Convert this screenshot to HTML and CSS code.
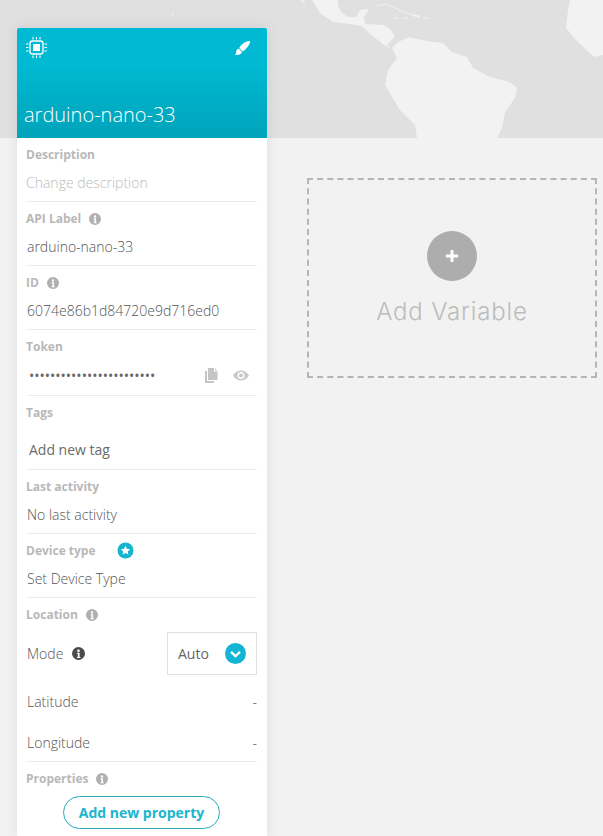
FILE: index.html
```html
<!DOCTYPE html>
<html lang="en">
<head>
<meta charset="utf-8">
<title>arduino-nano-33</title>
<link rel="stylesheet" href="styles.css">
</head>
<body>
<svg class="map" width="603" height="138" viewBox="0 0 603 138" aria-hidden="true">
  <rect width="603" height="138" fill="#e0e0e0"/>
  <g fill="#f2f2f2">
    <path d="M312 0L320 13L333 22L350 24L362 26L370 34L378 40L385 46L392 49L387 45L391 41L395 36L390 29L383 25L365 24L364 17L369 10L368 9L360 10L356 17L348 17L341 12L338 5L338 0Z"/>
    <path d="M392 48L398 42L410 37L417 39L433 42L443 43L452 52L467 57L473 68L490 77L510 82L517 88L515 98L505 112L502 128L497 138L417 138L415 125L400 110L392 97L385 85L388 70L397 58Z"/>
    <path d="M570 0L568 10L566 28L576 40L594 57L603 55L603 0Z"/>
    <circle cx="173" cy="14" r="1"/>
  </g>
  <g fill="none" stroke="#f2f2f2">
    <path d="M301 0L305 3" stroke-width="1.5"/>
    <path d="M377 6L387 4L403 12L413 15" stroke-width="1"/>
    <path d="M413 15L420 17" stroke-width="2"/>
    <path d="M423 17L430 19M393 18L399 18M403 18L408 18" stroke-width="1"/>
  </g>
</svg>
<div class="layout">
  <aside class="device">
    <header class="device-head">
      <div class="head-icons">
        <svg class="chip" width="23" height="23" viewBox="0 0 23 23" aria-hidden="true">
          <rect x="5" y="5" width="13" height="13" rx="2.5" fill="none" stroke="#fff" stroke-width="1.3"/>
          <rect x="8" y="8" width="7" height="7" fill="#fff"/>
          <path d="M8 1v2.5M11.5 1v2.5M15 1v2.5M8 19.5V22M11.5 19.5V22M15 19.5V22M1 8h2.500M1 11.500h2.500M1 15h2.500M19.500 8H22M19.500 11.500H22M19.500 15H22" stroke="#fff" stroke-width="1.100" fill="none"/>
        </svg>
        <svg class="brush" width="17" height="17" viewBox="0 0 17 17" aria-hidden="true">
          <path fill="#fff" d="M16 2C16.500 5 12 10.500 8.700 12.500L5.200 9C7 5.500 12 1.500 16 2Z"/>
          <path fill="#fff" d="M4.500 9.500L8 13C7.500 15.500 3 16.800 1 15.500C2.200 14.500 2 13.500 2.300 12.200C2.600 10.800 3.400 9.900 4.500 9.500Z"/>
        </svg>
      </div>
      <h1 class="device-name">arduino-nano-33</h1>
    </header>

    <section class="field">
      <h2 class="label">Description</h2>
      <p class="value value-muted">Change description</p>
    </section>
    <section class="field">
      <h2 class="label">API Label <svg class="info" viewBox="0 0 12 12" aria-hidden="true"><use href="#i-info"/></svg></h2>
      <p class="value">arduino-nano-33</p>
    </section>
    <section class="field">
      <h2 class="label">ID <svg class="info" viewBox="0 0 12 12" aria-hidden="true"><use href="#i-info"/></svg></h2>
      <p class="value">6074e86b1d84720e9d716ed0</p>
    </section>
    <section class="field field-token">
      <h2 class="label">Token</h2>
      <div class="token-row">
        <p class="value token">••••••••••••••••••••••••</p>
        <svg class="copy" width="14" height="15" viewBox="0 0 14 15" aria-hidden="true">
          <path fill="#c4c4c4" d="M4 0h6v3.500h3.500V12H4Z"/>
          <path fill="#c4c4c4" d="M11 0.300L13.300 2.600H11Z"/>
          <path fill="#c4c4c4" d="M1 3h2v10h7v2H1Z"/>
        </svg>
        <svg class="eye" width="16" height="11" viewBox="0 0 16 11" aria-hidden="true">
          <path fill="#c9c9c9" fill-rule="evenodd" d="M0 5.500C2 2 5 0.500 8 0.500S14 2 16 5.500C14 9 11 10.500 8 10.500S2 9 0 5.500ZM8 2A3.500 3.500 0 1 0 8 9A3.500 3.500 0 1 0 8 2Z"/>
          <circle cx="8" cy="5.500" r="2" fill="#c9c9c9"/>
        </svg>
      </div>
    </section>
    <section class="field field-tags">
      <h2 class="label">Tags</h2>
      <p class="value tag-input">Add new tag</p>
    </section>
    <section class="field">
      <h2 class="label">Last activity</h2>
      <p class="value">No last activity</p>
    </section>
    <section class="field">
      <h2 class="label label-type">Device type
        <svg class="star" width="17" height="17" viewBox="0 0 17 17" aria-hidden="true">
          <circle cx="8.500" cy="8.500" r="8" fill="#17b4cf"/>
          <path fill="#fff" d="M8.500 3.800l1.400 3 3.200.4-2.400 2.200.7 3.200-2.900-1.600-2.900 1.600.7-3.200-2.400-2.200 3.200-.4Z"/>
        </svg>
      </h2>
      <p class="value">Set Device Type</p>
    </section>
    <section class="field field-location">
      <h2 class="label">Location <svg class="info" viewBox="0 0 12 12" aria-hidden="true"><use href="#i-info"/></svg></h2>
      <div class="mode-row">
        <span class="value mode-label">Mode <svg class="info info-dark" viewBox="0 0 12 12" aria-hidden="true"><use href="#i-info"/></svg></span>
        <div class="select">
          <span class="select-text">Auto</span>
          <svg width="21" height="21" viewBox="0 0 21 21" aria-hidden="true">
            <circle cx="10.500" cy="10.500" r="10.500" fill="#12b5d2"/>
            <path d="M6 8.800l4.500 4.300L15 8.800" fill="none" stroke="#fff" stroke-width="2.400"/>
          </svg>
        </div>
      </div>
      <div class="coord coord-lat"><span>Latitude</span><span>-</span></div>
      <div class="coord coord-long"><span>Longitude</span><span>-</span></div>
    </section>
    <section class="field field-props">
      <h2 class="label">Properties <svg class="info" viewBox="0 0 12 12" aria-hidden="true"><use href="#i-info"/></svg></h2>
      <button class="add-prop" type="button">Add new property</button>
    </section>
  </aside>

  <main class="canvas">
    <div class="add-var">
      <span class="add-circle">
        <svg width="14" height="14" viewBox="0 0 14 14" aria-hidden="true"><path d="M7 1v12M1 7h12" stroke="#fff" stroke-width="3"/></svg>
      </span>
      <span class="add-text">Add Variable</span>
    </div>
  </main>
</div>
<svg width="0" height="0" class="defs" aria-hidden="true">
  <symbol id="i-info" viewBox="0 0 12 12">
    <path fill="currentColor" fill-rule="evenodd" d="M6 0a6 6 0 1 0 0 12A6 6 0 1 0 6 0ZM6 2.200a1.200 1.200 0 1 1 0 2.400a1.200 1.200 0 1 1 0-2.400ZM4.500 5.200h2.500v4h.8v1H4.500v-1h.9v-3h-.9Z"/>
  </symbol>
</svg>
</body>
</html>
```
FILE: styles.css
```css
* { box-sizing: border-box; }
html, body { margin: 0; padding: 0; height: 100%; }
body {
  position: relative;
  width: 603px;
  height: 836px;
  overflow: hidden;
  background: #f2f2f2;
  font-family: "Open Sans", "Liberation Sans", sans-serif;
  color: #555;
}
h1, h2, p { margin: 0; }
.map { position: absolute; left: 0; top: 0; display: block; }
.defs { position: absolute; }
.layout {
  position: relative;
  display: flex;
  align-items: flex-start;
  padding: 28px 0 0 17px;
}
.device {
  width: 250px;
  height: 808px;
  flex: none;
  padding: 0;
  background: #fff;
  border-radius: 2px 2px 0 0;
  box-shadow: 0 0 14px rgba(0, 0, 0, .09);
}
.device-head {
  height: 110px;
  display: flex;
  flex-direction: column;
  justify-content: space-between;
  background: linear-gradient(#00b9d2 0, #00b9d2 35%, #00a3ba 100%);
  border-radius: 2px 2px 0 0;
  padding: 8px 16px 10px 7px;
}
.head-icons { display: flex; justify-content: space-between; align-items: flex-start; }
.chip { display: block; margin-left: 1px; }
.brush { display: block; margin-top: 3px; }
.device-name {
  font-size: 20px;
  line-height: 27px;
  font-weight: 300;
  color: #fff;
}
.field {
  height: 64px;
  margin: 0 10px;
  padding: 8px 0 0;
  border-bottom: 1px solid #ebebeb;
}
.label {
  display: flex;
  align-items: center;
  gap: 8px;
  height: 18px;
  margin-left: -1px;
  font-size: 12px;
  line-height: 18px;
  font-weight: 700;
  color: #b8b8b8;
}
.info { width: 12px; height: 12px; color: #b0b0b0; flex: none; }
.info-dark { color: #4a4a4a; width: 13px; height: 13px; margin-left: 9px; }
.value {
  margin-top: 9px;
  font-size: 14px;
  line-height: 20px;
  font-weight: 300;
  color: #555;
}
.value-muted { color: #bcbcbc; margin-left: -1px; }
.field-token { height: 66px; }
.token-row { display: flex; align-items: center; margin-top: 9px; height: 20px; padding-right: 8px; }
.token { margin: 0; padding: 2px 0 0 2px; flex: 1; font-weight: 400; font-size: 14px; line-height: 20px; color: #666; }
.copy { margin-right: 15px; }
.field-tags { height: 74px; }
.tag-input { margin-top: 18px; padding-left: 2px; font-weight: 400; font-size: 14px; color: #6b6b6b; }
.label-type { gap: 21px; }
.star { margin-top: -1px; }
.field-location { height: 164px; }
.mode-row {
  display: flex;
  justify-content: space-between;
  align-items: center;
  margin-top: 8px;
  height: 43px;
}
.mode-label { margin: 0; display: flex; align-items: center; gap: 0; }
.select {
  width: 90px;
  height: 43px;
  display: flex;
  align-items: center;
  justify-content: space-between;
  padding: 0 10px;
  border: 1px solid #e0e0e0;
}
.select-text { font-size: 14px; color: #666; font-weight: 400; }
.coord {
  display: flex;
  justify-content: space-between;
  height: 20px;
  font-size: 14px;
  line-height: 20px;
  font-weight: 300;
  color: #555;
}
.coord-lat { margin-top: 17px; }
.coord-long { margin-top: 21px; }
.field-props { height: auto; border: 0; }
.add-prop {
  display: block;
  width: 157px;
  height: 33px;
  margin: 8px 0 0 36px;
  padding: 0;
  background: #fff;
  border: 1px solid #2aa9bd;
  border-radius: 17px;
  font-family: inherit;
  font-size: 14px;
  font-weight: 700;
  color: #19b5cf;
}
.canvas { padding: 150px 0 0 40px; }
.add-var {
  width: 290px;
  height: 200px;
  display: flex;
  flex-direction: column;
  align-items: center;
  padding-top: 51px;
  border: 2px dashed #b5b5b5;
}
.add-circle {
  width: 50px;
  height: 50px;
  display: flex;
  align-items: center;
  justify-content: center;
  border-radius: 50%;
  background: #adadad;
}
.add-text {
  margin-top: 15px;
  font-family: Inter, "Open Sans", sans-serif;
  font-size: 24px;
  line-height: 32px;
  letter-spacing: .85px;
  font-weight: 300;
  color: #bcbcbc;
}
```
